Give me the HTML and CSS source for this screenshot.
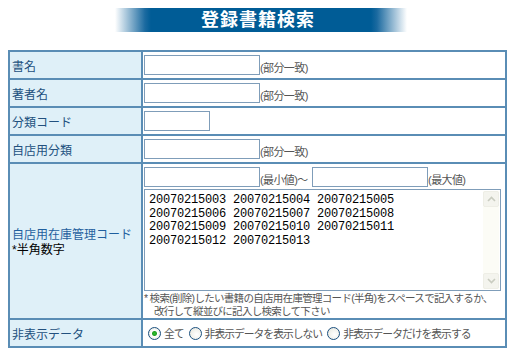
FILE: index.html
```html
<!DOCTYPE html>
<html lang="ja">
<head>
    <meta charset="UTF-8">
    <title>登録書籍検索</title>
    <link rel="stylesheet" href="styles.css">
</head>
<body>
    <div class="title"><span>登録書籍検索</span></div>
    <form class="search-form">
        <table class="search">
            <tr>
                <th>書名</th>
                <td><input type="text" class="text-input"><span class="note">(部分一致)</span></td>
            </tr>
            <tr>
                <th>著者名</th>
                <td><input type="text" class="text-input"><span class="note">(部分一致)</span></td>
            </tr>
            <tr>
                <th>分類コード</th>
                <td><input type="text" class="text-input short"></td>
            </tr>
            <tr>
                <th>自店用分類</th>
                <td><input type="text" class="text-input"><span class="note">(部分一致)</span></td>
            </tr>
            <tr>
                <th class="code-label"><div class="blue">自店用在庫管理コード</div><div>*半角数字</div></th>
                <td class="code-cell">
                    <div class="range">
                        <input type="text" class="text-input"><span class="note">(最小値)～</span>
                        <input type="text" class="text-input"><span class="note">(最大値)</span>
                    </div>
                    <div class="textbox">
                        <textarea class="codes">20070215003 20070215004 20070215005
20070215006 20070215007 20070215008
20070215009 20070215010 20070215011
20070215012 20070215013</textarea>
                        <div class="scrollbar">
                            <div class="scroll-btn"><svg width="9" height="6" viewBox="0 0 9 6"><path d="M1 5 L4.5 1.5 L8 5" fill="none" stroke="#c9ccc0" stroke-width="1.6"/></svg></div>
                            <div class="scroll-track"></div>
                            <div class="scroll-btn"><svg width="9" height="6" viewBox="0 0 9 6"><path d="M1 1 L4.5 4.5 L8 1" fill="none" stroke="#c9ccc0" stroke-width="1.6"/></svg></div>
                        </div>
                    </div>
                    <p class="footnote">* 検索(削除)したい書籍の自店用在庫管理コード(半角)をスペースで記入するか、<br><span class="indent">改行して縦並びに記入し検索して下さい</span></p>
                </td>
            </tr>
            <tr>
                <th>非表示データ</th>
                <td>
                    <div class="radios">
                        <label><input type="radio" name="hidden" checked>全て</label>
                        <label><input type="radio" name="hidden">非表示データを表示しない</label>
                        <label><input type="radio" name="hidden">非表示データだけを表示する</label>
                    </div>
                </td>
            </tr>
        </table>
    </form>
</body>
</html>
```

FILE: styles.css
```css
body {
    margin: 8px;
    background: #fff;
    color: #000;
    font-family: "Liberation Sans", "Noto Sans CJK JP", sans-serif;
    font-size: 12px;
}
.title {
    width: 292px;
    height: 24px;
    margin: 0 auto 0 107px;
    background: linear-gradient(to right, #fff 0, #1b6aa0 30px, #005c96 36px, #005c96 256px, #1b6aa0 262px, #fff 292px);
    text-align: center;
}
.title span {
    color: #fff;
    font-size: 18px;
    font-weight: bold;
    line-height: 24px;
    letter-spacing: 1px;
    margin-right: 6px;
}
.search-form {
    margin-top: 18px;
}
.search {
    border-collapse: collapse;
    width: 499px;
}
.search th,
.search td {
    border: 2px solid #5a8db5;
    height: 26px;
    padding: 0 0 0 1px;
    vertical-align: middle;
}
.search th {
    width: 129px;
    background: #dff0f8;
    color: #22507e;
    font-weight: normal;
    text-align: left;
    padding-left: 2px;
}
.code-label {
    color: #000;
    line-height: 15px;
}
.search th.code-label {
    padding-top: 3px;
}
.code-label div {
    color: #000;
}
.code-label .blue {
    color: #1f5f9e;
}
.text-input {
    box-sizing: border-box;
    width: 116px;
    height: 20px;
    margin: 0;
    border: 1px solid #7f9db9;
    vertical-align: bottom;
}
.text-input.short {
    width: 66px;
}
.note {
    color: #555;
    font-size: 11px;
    letter-spacing: -0.6px;
    vertical-align: bottom;
    line-height: 14px;
}
.search td.code-cell {
    padding-top: 3px;
    vertical-align: top;
}
.range {
    height: 20px;
    margin-bottom: 2px;
}
.range .note {
    margin-right: 1px;
}
.textbox {
    display: flex;
    width: 357px;
    height: 102px;
    box-sizing: border-box;
    border: 1px solid #7f9db9;
}
.codes {
    flex: 1;
    border: none;
    margin: 0;
    padding: 4px 4px;
    resize: none;
    outline: none;
    font-family: "Liberation Mono", monospace;
    font-size: 12px;
    letter-spacing: -0.2px;
    line-height: 13.5px;
    color: #000;
    overflow: hidden;
}
.scrollbar {
    width: 16px;
    margin: 1px;
    display: flex;
    flex-direction: column;
    background: #fcfcf6;
}
.scroll-btn {
    height: 14px;
    border: 1px solid #eeeee6;
    background: #f4f4ee;
    display: flex;
    align-items: center;
    justify-content: center;
    border-radius: 2px;
}
.scroll-track {
    flex: 1;
}
.footnote {
    margin: 1px 0 0;
    color: #555;
    font-size: 10.5px;
    letter-spacing: -0.7px;
    line-height: 13px;
}
.footnote .indent {
    padding-left: 10px;
}
.radios {
    display: flex;
    align-items: center;
    color: #555;
    font-size: 10.8px;
    letter-spacing: -1px;
}
.radios label {
    display: flex;
    align-items: center;
    margin-left: 1px;
}
.radios input {
    appearance: none;
    width: 13px;
    height: 13px;
    margin: 0 3px 0 4px;
    border: 1px solid #1c5180;
    border-radius: 50%;
    background: radial-gradient(circle at 60% 60%, #fff 0, #f0f0ea 60%, #d8d8d0 100%);
}
.radios label:first-child {
    margin-left: 0;
}
.radios input:checked {
    background: radial-gradient(circle, #2fc22f 0, #21a121 2px, #fff 3px, #f0f0ea 70%, #d8d8d0 100%);
}
```
